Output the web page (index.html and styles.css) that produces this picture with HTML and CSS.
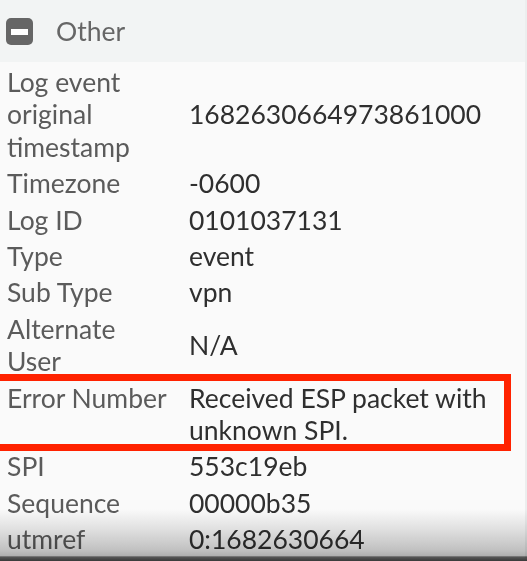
FILE: index.html
```html
<!DOCTYPE html>
<html>
<head>
<meta charset="utf-8">
<link rel="stylesheet" href="styles.css">
</head>
<body>
<div class="panel">
  <div class="header">
    <svg class="toggle" width="27" height="27" viewBox="0 0 27 27"><rect x="0" y="0" width="27" height="27" rx="5" fill="#666"/><rect x="5" y="11" width="17" height="6" fill="#fff"/></svg>
    <span class="title">Other</span>
  </div>
  <div class="rows">
    <div class="row"><div class="label">Log event original timestamp</div><div class="value">1682630664973861000</div></div>
    <div class="row"><div class="label">Timezone</div><div class="value">-0600</div></div>
    <div class="row"><div class="label">Log ID</div><div class="value">0101037131</div></div>
    <div class="row"><div class="label">Type</div><div class="value">event</div></div>
    <div class="row"><div class="label">Sub Type</div><div class="value">vpn</div></div>
    <div class="row"><div class="label">Alternate User</div><div class="value">N/A</div></div>
    <div class="row highlight"><div class="label">Error Number</div><div class="value">Received ESP packet with unknown SPI.</div></div>
    <div class="row"><div class="label">SPI</div><div class="value">553c19eb</div></div>
    <div class="row"><div class="label">Sequence</div><div class="value">00000b35</div></div>
    <div class="row"><div class="label">utmref</div><div class="value">0:1682630664</div></div>
  </div>
</div>
<div class="shade"></div>
</body>
</html>
```

FILE: styles.css
```css
html, body {
  margin: 0;
  padding: 0;
  height: 561px;
  overflow: hidden;
}
body {
  background: #fafafa;
  font-family: Lato, "Open Sans", sans-serif;
  font-size: 26.5px;
  position: relative;
}
.panel {
  border-right: 2px solid #eceeee;
}
.header {
  height: 62px;
  background: #f2f4f4;
  display: flex;
  align-items: center;
  padding-left: 6px;
  box-sizing: border-box;
}
.toggle {
  flex: none;
}
.title {
  margin-left: 23px;
  color: #666;
  line-height: 1;
  margin-top: 1px;
}
.rows {
  padding-top: 2px;
}
.row {
  display: grid;
  grid-template-columns: 189px 1fr;
  align-items: center;
  padding: 2px 0;
  line-height: 32.4px;
  position: relative;
}
.label {
  padding-left: 7px;
  color: #5b5b5b;
  padding-right: 16px;
  align-self: start;
}
.value {
  color: #2f2f2f;
  padding-right: 30px;
}
.highlight::after {
  content: "";
  position: absolute;
  left: -10px;
  right: 14px;
  top: -6px;
  bottom: -3px;
  border: 7px solid #ff2200;
}
.shade {
  position: absolute;
  left: 0;
  right: 0;
  bottom: 0;
  height: 52px;
  background: linear-gradient(to bottom, #ffffff 0%, #e4e4e4 40%, #c4c4c4 80%, #b4b4b4 90%, #5a5a5a 92%, #3a3a3a 100%);
  mix-blend-mode: multiply;
  pointer-events: none;
}
```
